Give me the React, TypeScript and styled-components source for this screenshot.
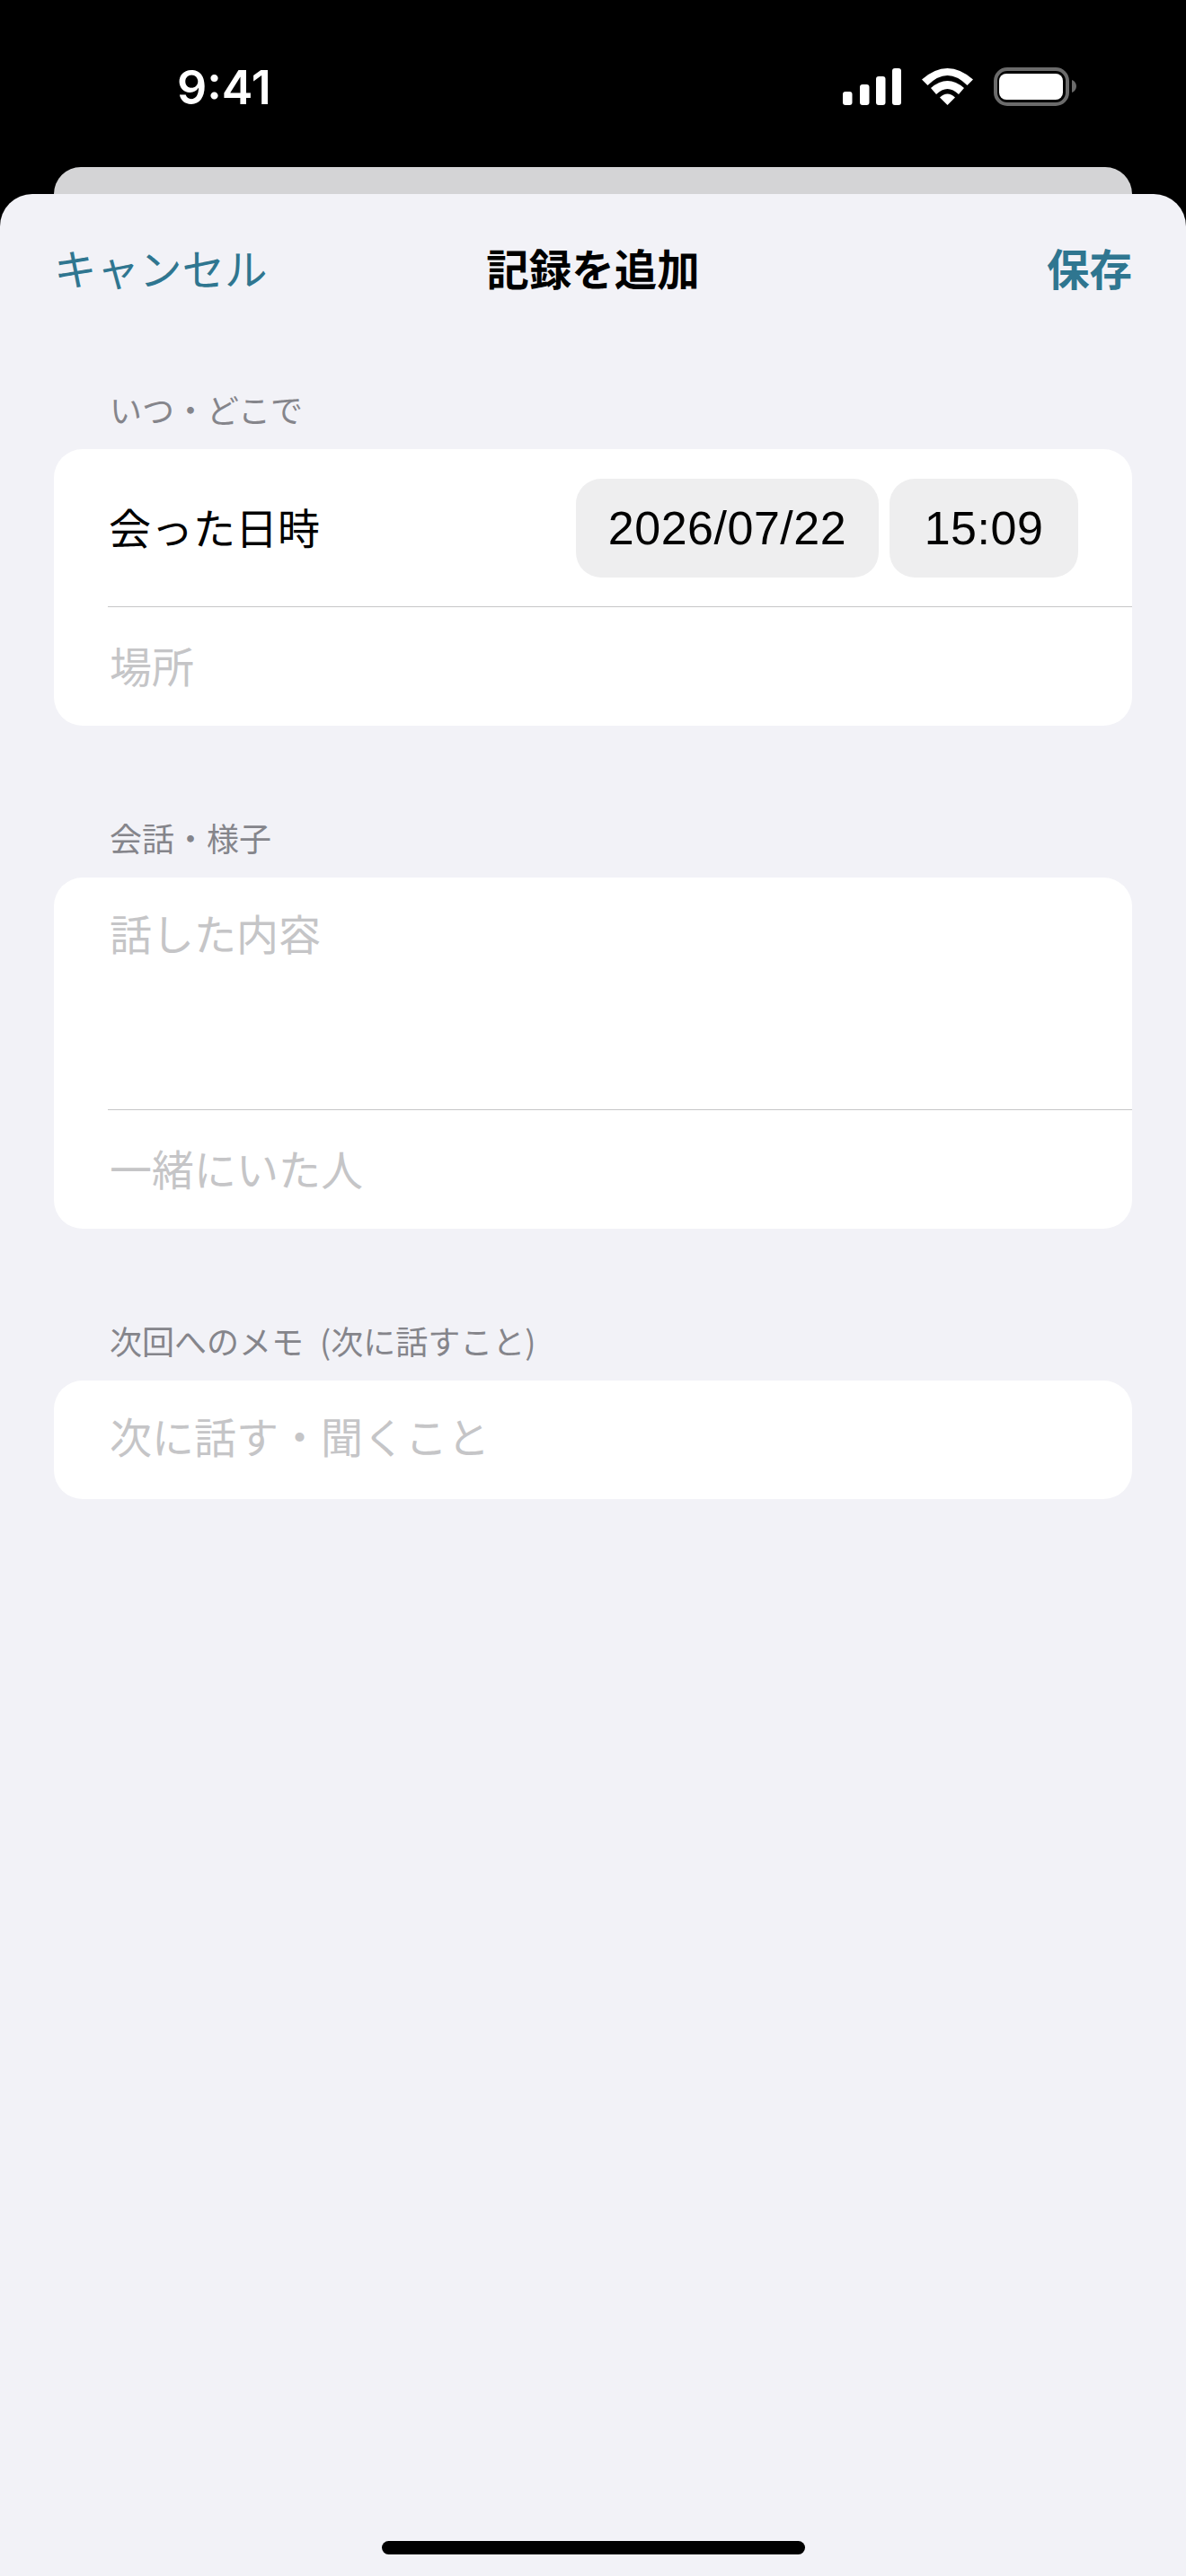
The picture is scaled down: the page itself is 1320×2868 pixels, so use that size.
import React from "react";
import styled, { createGlobalStyle } from "styled-components";

const Global = createGlobalStyle`
  html, body { margin: 0; padding: 0; background: #000; }
  body { font-family: "Liberation Sans", "Noto Sans CJK JP", sans-serif; }
`;

const Screen = styled.div`
  width: 1320px;
  height: 2868px;
  background: #000;
  display: flex;
  flex-direction: column;
  overflow: hidden;
`;

const StatusBar = styled.div`
  height: 186px;
  box-sizing: border-box;
  padding: 75px 122px 0 197px;
  display: flex;
  justify-content: space-between;
  align-items: flex-start;
`;

const Clock = styled.div`
  color: #fff;
  font: 600 52px/46px Inter, "Liberation Sans", sans-serif;
`;

const StatusIcons = styled.div`
  display: flex;
  align-items: flex-start;
  gap: 23px;
`;

const BackSheet = styled.div`
  height: 30px;
  margin: 0 60px;
  background: #d4d4d6;
  border-radius: 32px 32px 0 0;
`;

const Sheet = styled.div`
  flex: 1;
  background: #f2f2f7;
  border-radius: 36px 36px 0 0;
  display: flex;
  flex-direction: column;
  padding: 0 60px;
`;

const NavBar = styled.div`
  height: 164px;
  margin-bottom: 57px;
  display: flex;
  align-items: center;
  justify-content: space-between;
  font-size: 47.5px;
  font-family: "Noto Sans CJK JP", sans-serif;
`;

const NavAction = styled.span<{ $strong?: boolean }>`
  color: #2f7690;
  font-weight: ${(p) => (p.$strong ? 700 : 400)};
  line-height: 60px;
  width: 240px;
  text-align: ${(p) => (p.$strong ? "right" : "left")};
`;

const NavTitle = styled.span`
  color: #000;
  font-weight: 700;
  line-height: 60px;
`;

const SectionLabel = styled.div`
  padding-left: 62px;
  height: 42px;
  font: 400 36px/36px "Noto Sans CJK JP", sans-serif;
  word-spacing: 10px;
  color: #85858b;
  margin-bottom: 21px;
`;

const Card = styled.div<{ $gap?: number }>`
  background: #fff;
  border-radius: 32px;
  margin-bottom: ${(p) => p.$gap ?? 0}px;
  overflow: hidden;
`;

const Row = styled.div<{ $height: number; $top?: boolean; $divided?: boolean }>`
  height: ${(p) => p.$height}px;
  box-sizing: border-box;
  margin-left: 60px;
  padding-right: 60px;
  display: flex;
  align-items: ${(p) => (p.$top ? "flex-start" : "center")};
  justify-content: space-between;
  border-bottom: ${(p) => (p.$divided ? "1px solid #c6c6c8" : "none")};
`;

const FieldLabel = styled.span`
  font: 400 47px/60px "Noto Sans CJK JP", sans-serif;
  color: #000;
  padding: 0 0 4px 1px;
`;

const Placeholder = styled.span<{ $top?: boolean; $lift?: number }>`
  font: 400 47px/60px "Noto Sans CJK JP", sans-serif;
  color: #c5c5c7;
  padding: 0 0 ${(p) => (p.$top ? 0 : (p.$lift ?? 4))}px 2px;
  margin-top: ${(p) => (p.$top ? 31 : 0)}px;
`;

const Pickers = styled.div`
  display: flex;
  gap: 12px;
`;

const Pill = styled.div<{ $width: number }>`
  width: ${(p) => p.$width}px;
  height: 110px;
  border-radius: 28px;
  background: #eeeeef;
  color: #000;
  display: flex;
  align-items: center;
  justify-content: center;
  font: 400 52px/60px "Liberation Sans", sans-serif;
  letter-spacing: 0.5px;
`;

const HomeBar = styled.div`
  width: 471px;
  height: 15px;
  border-radius: 8px;
  background: #000;
  margin: auto auto 24px;
`;

const Signal = () => (
  <svg width="66" height="42" viewBox="0 0 66 42" fill="#fff">
    <rect x="1" y="27" width="10.500" height="15" rx="3" />
    <rect x="20" y="19" width="10.500" height="23" rx="3" />
    <rect x="38" y="10" width="10.500" height="32" rx="3" />
    <rect x="56" y="1" width="10" height="41" rx="3" />
  </svg>
);

const Wifi = () => (
  <svg width="57" height="42" viewBox="0 -1 57 42" fill="#fff">
    <path d="M0 12.500 Q28.500 -12.500 57 12.500 L50.500 19 Q28.500 -3 6.500 19 Z" />
    <path d="M10 22 Q28.500 6 47 22 L41 29 Q28.500 17 16 29 Z" />
    <path d="M20 32.500 Q28.500 24.500 37 32.500 L28.500 41 Z" />
  </svg>
);

const Battery = () => (
  <svg width="92" height="44" viewBox="0 0 92 44">
    <rect x="2" y="2" width="80" height="39" rx="13" fill="none" stroke="#6b6b6b" strokeWidth="4" />
    <rect x="6" y="7" width="71" height="29" rx="8" fill="#fff" />
    <path d="M87 14 C90 15 92 18 92 21 C92 24 90 27 87 28 Z" fill="#6b6b6b" />
  </svg>
);

export default function App() {
  return (
    <Screen>
      <Global />
      <StatusBar>
        <Clock>9:41</Clock>
        <StatusIcons>
          <Signal />
          <Wifi />
          <Battery />
        </StatusIcons>
      </StatusBar>
      <BackSheet />
      <Sheet>
        <NavBar>
          <NavAction>キャンセル</NavAction>
          <NavTitle>記録を追加</NavTitle>
          <NavAction $strong>保存</NavAction>
        </NavBar>
        <SectionLabel>いつ・どこで</SectionLabel>
        <Card $gap={106}>
          <Row $height={176} $divided>
            <FieldLabel>会った日時</FieldLabel>
            <Pickers>
              <Pill $width={337}>2026/07/22</Pill>
              <Pill $width={210}>15:09</Pill>
            </Pickers>
          </Row>
          <Row $height={132}>
            <Placeholder>場所</Placeholder>
          </Row>
        </Card>
        <SectionLabel>会話・様子</SectionLabel>
        <Card $gap={106}>
          <Row $height={259} $top $divided>
            <Placeholder $top>話した内容</Placeholder>
          </Row>
          <Row $height={132}>
            <Placeholder>一緒にいた人</Placeholder>
          </Row>
        </Card>
        <SectionLabel>次回へのメモ (次に話すこと)</SectionLabel>
        <Card>
          <Row $height={132}>
            <Placeholder $lift={10}>次に話す・聞くこと</Placeholder>
          </Row>
        </Card>
        <HomeBar />
      </Sheet>
    </Screen>
  );
}
